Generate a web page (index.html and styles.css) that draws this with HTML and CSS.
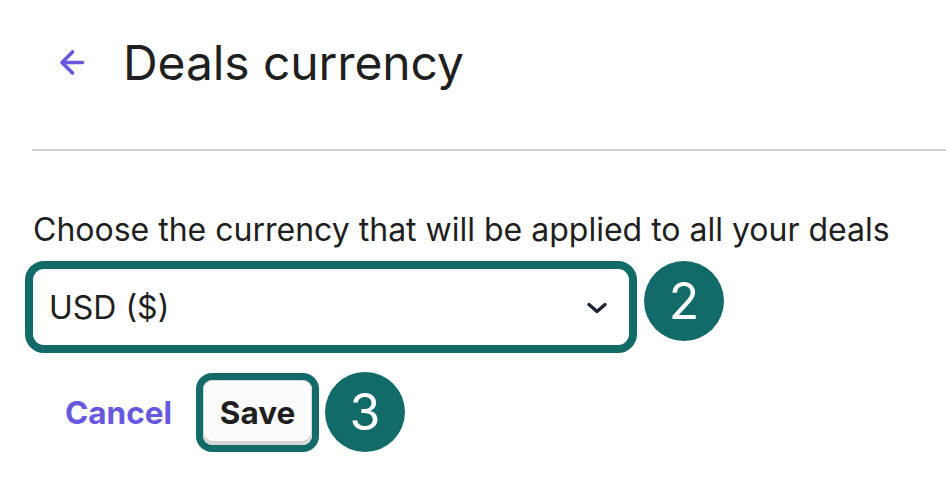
FILE: index.html
```html
<!DOCTYPE html>
<html lang="en">
<head>
<meta charset="utf-8">
<link rel="stylesheet" href="styles.css">
</head>
<body>
<div class="page">
  <header class="header">
    <svg class="back" width="26" height="27" viewBox="0 0 26 27" fill="none" stroke="#6758e0" stroke-width="3.6" stroke-linecap="round" stroke-linejoin="round"><path d="M23.5 13.5H3M13.5 3L3 13.5L13.5 24"/></svg>
    <h1 class="title">Deals currency</h1>
  </header>
  <hr class="divider">
  <section class="form">
    <label class="label">Choose the currency that will be applied to all your deals</label>
    <div class="row">
      <div class="hl hl-select">
        <div class="select">
          <span>USD ($)</span>
          <svg class="chev" width="22" height="14" viewBox="0 0 22 14" fill="none" stroke="#1d2433" stroke-width="3.4" stroke-linecap="round" stroke-linejoin="round"><path d="M3 3.5l8 7 8-7"/></svg>
        </div>
      </div>
      <div class="badge">2</div>
    </div>
    <div class="row actions">
      <button class="cancel">Cancel</button>
      <div class="hl hl-save">
        <button class="save">Save</button>
      </div>
      <div class="badge badge3">3</div>
    </div>
  </section>
</div>
</body>
</html>
```
FILE: styles.css
```css
* { box-sizing: border-box; }
html, body { margin: 0; padding: 0; background: #fff; }
body { font-family: Inter, "Noto Sans", sans-serif; color: #1f1f1f; width: 946px; height: 490px; overflow: hidden; }
.header { display: flex; align-items: center; height: 124px; padding-left: 59px; }
.back { margin-top: 0; }
.title { margin: 0 0 0 38px; font-size: 48px; font-weight: 400; letter-spacing: -0.1px; color: #1f1f1f; }
.divider { margin: 25px 0 0 32px; border: 0; height: 2px; background: #cfcfcf; }
.form { padding: 60px 0 0 32px; }
.label { display: block; font-size: 32px; line-height: 38px; color: #1f1f1f; margin-left: 1px; }
.row { display: flex; align-items: center; }
.hl { border: 8px solid #136b69; background: #fff; }
.hl-select { margin: 12px 0 0 -7px; width: 612px; height: 92px; border-radius: 19px; }
.select { height: 100%; border-radius: 11px; display: flex; align-items: center; justify-content: space-between; padding: 0 21px 0 16px; font-size: 32px; color: #1f1f1f; }
.chev { margin-top: 2px; }
.badge { width: 80px; height: 80px; border-radius: 50%; background: #136b69; color: #fff; font-size: 50px; display: flex; align-items: center; justify-content: center; margin-left: 7px; }
.actions { margin-top: 19px; }
button { font-family: inherit; }
.cancel { background: none; border: 0; padding: 0; margin-left: 33px; font-size: 31.5px; font-weight: 700; color: #6758e0; cursor: pointer; }
.hl-save { margin-left: 24px; width: 123px; height: 79px; border-radius: 16px; border-width: 7px; }
.save { width: 100%; height: 100%; border: 1px solid #d8d8d8; border-radius: 10px; background: #fbfbfb; box-shadow: inset 0 -3px 0 #d4d4d4; font-size: 31.5px; font-weight: 700; color: #1f1f1f; padding: 0; }
.badge3 { margin-left: 6px; }
```
